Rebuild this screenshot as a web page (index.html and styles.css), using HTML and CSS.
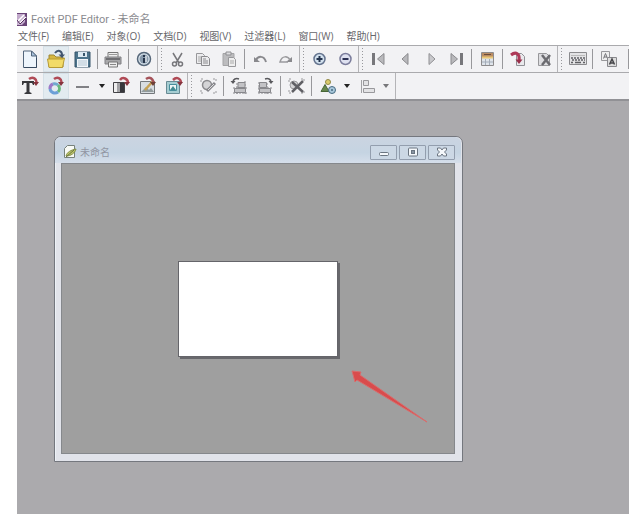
FILE: index.html
```html
<!DOCTYPE html>
<html lang="zh-CN">
<head>
    <meta charset="utf-8">
    <title>Foxit PDF Editor - 未命名</title>
    <link rel="stylesheet" href="styles.css">
</head>
<body>
<div class="app">
    <header class="titlebar">
        <svg class="app-icon" width="10" height="13" viewBox="0 0 10 13">
            <path d="M0 0h10v13H0z" fill="#694477"/>
            <path d="M0 1h8v8l-3 3H0z" fill="#c2aacb"/>
            <path d="M1 8l6-6M2 11l7-7" stroke="#fff" stroke-width="1.5"/>
            <path d="M0 7l3 4 6-6" stroke="#56305f" fill="none"/>
        </svg>
        <h1>Foxit PDF Editor - <span class="doc-name">未命名</span></h1>
    </header>

    <nav class="menubar">
        <button type="button">文件(F)</button>
        <button type="button">编辑(E)</button>
        <button type="button">对象(O)</button>
        <button type="button">文档(D)</button>
        <button type="button">视图(V)</button>
        <button type="button">过滤器(L)</button>
        <button type="button">窗口(W)</button>
        <button type="button">帮助(H)</button>
    </nav>

    <div class="toolbar">
        <button type="button" class="tool" aria-label="New">
            <svg viewBox="0 0 20 20"><path d="M3.500 2h8l5 5v11.500h-13z" fill="#eef5fc" stroke="#53667c"/><path d="M11.500 2v5h5z" fill="#a9c2dc" stroke="#53667c"/><path d="M4 18.500h12.500V9" fill="none" stroke="#394b61"/></svg>
        </button>
        <button type="button" class="tool active" aria-label="Open">
            <svg viewBox="0 0 20 20"><path d="M3 18V6h5l2 2h7v10z" fill="#d6b741" stroke="#9d8738"/><path d="M1.500 10h15l2-1-2 9.500H3z" fill="#f2db68" stroke="#b79b36"/><path d="M9 4c3-4 7-2 7 2" fill="none" stroke="#41556f" stroke-width="2"/><path d="M12.500 5.500h6.500L16 9z" fill="#41556f"/></svg>
        </button>
        <button type="button" class="tool" aria-label="Save">
            <svg viewBox="0 0 20 20"><path d="M3 3h15v15H3z" fill="#4d748c" stroke="#36546a"/><path d="M6 3h9v5H6z" fill="#dce9f2"/><path d="M11 4h2v3h-2z" fill="#36546a"/><path d="M5 10h11v8H5z" fill="#f2f6fa"/><path d="M6 12h9M6 14h9M6 16h9" stroke="#b3c5d2"/></svg>
        </button>
        <span class="sep"></span>
        <button type="button" class="tool" aria-label="Print">
            <svg viewBox="0 0 20 20"><path d="M5 8V3.500h10V8" fill="#eee" stroke="#777"/><path d="M6 5.500h8" stroke="#999"/><path d="M2 8h16v7H2z" fill="#a8a8aa" stroke="#808084"/><path d="M3 10h14" stroke="#6e6e72" stroke-width="2"/><path d="M5.500 13h9v5h-9z" fill="#eee" stroke="#777"/><path d="M7 15.500h6" stroke="#888"/></svg>
        </button>
        <span class="sep"></span>
        <button type="button" class="tool" aria-label="Information">
            <svg viewBox="0 0 20 20"><circle cx="10" cy="10" r="6.500" fill="#d9e4ec" stroke="#56677a" stroke-width="1.500"/><circle cx="10" cy="10" r="4.500" fill="#8799ab"/><path d="M10 6v2M10 9v5" stroke="#26344a" stroke-width="2"/><path d="M12 7v6" stroke="#fff"/></svg>
        </button>
        <span class="grip"></span>
        <button type="button" class="tool" aria-label="Cut">
            <svg viewBox="0 0 20 20"><path d="M6 4l6 10M15 4L9 14" stroke="#77777b" stroke-width="1.500"/><circle cx="7.500" cy="15" r="2" fill="none" stroke="#77777b" stroke-width="1.500"/><circle cx="13.500" cy="15" r="2" fill="none" stroke="#77777b" stroke-width="1.500"/></svg>
        </button>
        <button type="button" class="tool" aria-label="Copy">
            <svg viewBox="0 0 20 20"><path d="M3.500 4.500h6l2 2v8h-8z" fill="#ececee" stroke="#97979a"/><path d="M5 8h4M5 10h3M5 12h3" stroke="#aaa"/><path d="M8.500 7.500h6l2 2v7h-8z" fill="#ececee" stroke="#8b8b8e"/><path d="M10 10h3M10 12h5M10 14h5" stroke="#8b8b8e"/></svg>
        </button>
        <button type="button" class="tool" aria-label="Paste">
            <svg viewBox="0 0 20 20"><path d="M4 4.500h11v12H4z" fill="#bcbcbe" stroke="#a4a4a6"/><path d="M7 3h5v3H7z" fill="#dedee0" stroke="#909093"/><path d="M9.500 8.500h5l2 2v7h-7z" fill="#eee" stroke="#98989b"/><path d="M11 12h4M11 14h4" stroke="#aaa"/></svg>
        </button>
        <span class="sep"></span>
        <button type="button" class="tool" aria-label="Undo">
            <svg viewBox="0 0 20 20"><path d="M4 8v5h6z" fill="#89898d"/><path d="M6 11c2-4 8-5 10 2" fill="none" stroke="#89898d" stroke-width="2"/></svg>
        </button>
        <button type="button" class="tool" aria-label="Redo">
            <svg viewBox="0 0 20 20"><path d="M16 8v5h-6z" fill="#89898d"/><path d="M14 11c-2-4-8-5-10 2h8" fill="none" stroke="#9b9b9e" stroke-width="1.500"/></svg>
        </button>
        <span class="grip"></span>
        <button type="button" class="tool" aria-label="Zoom in">
            <svg viewBox="0 0 20 20"><circle cx="10.500" cy="10" r="5.500" fill="#d2e1ee" stroke="#65748f" stroke-width="1.500"/><path d="M7.500 10h6M10.500 7v6" stroke="#24344e" stroke-width="2"/></svg>
        </button>
        <button type="button" class="tool" aria-label="Zoom out">
            <svg viewBox="0 0 20 20"><circle cx="10.500" cy="10" r="5.500" fill="#dee1f0" stroke="#7b7d9c" stroke-width="1.500"/><path d="M7.500 10h6" stroke="#2c3154" stroke-width="2"/></svg>
        </button>
        <span class="grip"></span>
        <button type="button" class="tool" aria-label="First page">
            <svg viewBox="0 0 20 20"><path d="M5.500 4v12" stroke="#77777b" stroke-width="3"/><path d="M16 4.500v11L9.500 10z" fill="#b9b9bc" stroke="#8b8b8e"/></svg>
        </button>
        <button type="button" class="tool" aria-label="Previous page">
            <svg viewBox="0 0 20 20"><path d="M14 4.500v11L8 10z" fill="#b9b9bc" stroke="#8b8b8e"/></svg>
        </button>
        <button type="button" class="tool" aria-label="Next page">
            <svg viewBox="0 0 20 20"><path d="M9 4.500v11l6-5.500z" fill="#c9c9cc" stroke="#909093"/></svg>
        </button>
        <button type="button" class="tool" aria-label="Last page">
            <svg viewBox="0 0 20 20"><path d="M5 4.500v11l6.500-5.500z" fill="#b9b9bc" stroke="#8b8b8e"/><path d="M15.500 4v12" stroke="#77777b" stroke-width="3"/></svg>
        </button>
        <span class="sep"></span>
        <button type="button" class="tool" aria-label="Properties">
            <svg viewBox="0 0 20 20"><path d="M4.500 3.500h12v13h-12z" fill="#dfe4ea" stroke="#8d8b8c"/><path d="M5 4h11v4H5z" fill="#b98b62"/><path d="M7 5.500h7" stroke="#6a4c3a"/><path d="M5 8.500h11" stroke="#e9c777" stroke-width="2"/><path d="M8.500 10v6M12.500 10v6M5 13h11" stroke="#a4adb9"/></svg>
        </button>
        <span class="sep"></span>
        <button type="button" class="tool" aria-label="Insert page">
            <svg viewBox="0 0 20 20"><path d="M8.500 4.500h5l3 3v9h-8z" fill="#e9e9ec" stroke="#919196"/><path d="M3 6c5-4 9-1 8 5" fill="none" stroke="#ad3857" stroke-width="3"/><path d="M7.500 10.500h7L11 15z" fill="#98304b"/></svg>
        </button>
        <button type="button" class="tool" aria-label="Delete page">
            <svg viewBox="0 0 20 20"><path d="M4.500 4.500h8l3 3v9h-11z" fill="#dedee1" stroke="#97979a"/><path d="M8 6l8 10M16 6L8 16" stroke="#6b6b70" stroke-width="2.500"/></svg>
        </button>
        <span class="grip"></span>
        <button type="button" class="tool" aria-label="Keyboard">
            <svg viewBox="0 0 20 20"><path d="M2.500 3.500h17v12h-17z" fill="#e3e3e5" stroke="#8b8b8e"/><path d="M4 6.500h14" stroke="#bbb"/><path d="M4 9h14M5 11h13" stroke="#606064" stroke-width="1.500" stroke-dasharray="2 1"/><path d="M4 13.500h2M8 13.500h6M16 13.500h2" stroke="#606064" stroke-width="1.500"/></svg>
        </button>
        <span class="sep"></span>
        <button type="button" class="tool" aria-label="Replace font">
            <svg viewBox="0 0 20 20"><path d="M3.500 2.500h8v9h-8z" fill="#eee" stroke="#98989b"/><path d="M5.500 9.500l2-5 2 5M6 8h3" fill="none" stroke="#747478"/><path d="M9.500 8.500h9v9h-9z" fill="#ddd" stroke="#88888c"/><path d="M11.500 15.500l2.500-5.500 2.500 5.500M12.500 14h3" fill="none" stroke="#454549" stroke-width="1.500"/></svg>
        </button>
        <span class="sep last"></span>
    </div>

    <div class="toolbar">
        <button type="button" class="tool" aria-label="Insert text">
            <svg viewBox="0 0 20 20"><path d="M2 5h12v4h-1l-1-2H9.500v9l2 1v1h-7v-1l2-1V7H4L3 9H2z" fill="#38383c"/><path d="M9 3c4-3 8 0 7.500 4" fill="none" stroke="#b04a56" stroke-width="2.500"/><path d="M13 6h6l-3 4z" fill="#85333e"/></svg>
        </button>
        <button type="button" class="tool active" aria-label="Insert graphic">
            <svg viewBox="0 0 20 20"><g fill="none" stroke-width="3"><path d="M4 13a5 5 0 0 1 3-5" stroke="#9c79c8"/><path d="M7 8a5 5 0 0 1 5 1" stroke="#70a8d0"/><path d="M12 9a5 5 0 0 1 0 7" stroke="#66b77d"/><path d="M12 16a5 5 0 0 1-8-3" stroke="#6b9fd7"/></g><path d="M8 3c4-3 8 0 7.500 4" fill="none" stroke="#b04a56" stroke-width="2.500"/><path d="M12 6h6l-3 4z" fill="#85333e"/></svg>
        </button>
        <button type="button" class="tool" aria-label="Line">
            <svg viewBox="0 0 20 20"><path d="M4 11h13" stroke="#5b5b60" stroke-width="1.500"/></svg>
        </button>
        <button type="button" class="drop" aria-label="Line options"><svg viewBox="0 0 8 6"><path d="M1 1h6L4 5z" fill="#222"/></svg></button>
        <button type="button" class="tool" aria-label="Insert shading">
            <svg viewBox="0 0 20 20"><path d="M2.500 6.500h11v10h-11z" fill="#a2a2a5" stroke="#434347"/><path d="M3 7h3v9H3z" fill="#eee"/><path d="M9 7h4v9H9z" fill="#38383c"/><path d="M9 4c3-4 8-1 8 3" fill="none" stroke="#b04a56" stroke-width="2.500"/><path d="M13 6h6l-3 4z" fill="#85333e"/></svg>
        </button>
        <button type="button" class="tool" aria-label="Insert image">
            <svg viewBox="0 0 20 20"><path d="M3.500 5.500h14v12h-14z" fill="#d8dde1" stroke="#74787c"/><path d="M4 16l5-5 3 3 2-2 3 4z" fill="#929c9d"/><path d="M8 14l8-9" stroke="#c6a253" stroke-width="2.500"/><path d="M9 3c4-3 7 0 8 4" fill="none" stroke="#a5535a" stroke-width="2.500"/><path d="M13 6h6l-3 4z" fill="#704037"/></svg>
        </button>
        <button type="button" class="tool" aria-label="Insert form">
            <svg viewBox="0 0 20 20"><path d="M3.500 5.500h13v12h-13z" fill="#a6cdd2" stroke="#688b94"/><path d="M6.500 8.500h7v6h-7z" fill="#eef6f5" stroke="#488e9b"/><path d="M7 14l3-4 3 4z" fill="#438a91"/><path d="M10 4c4-4 8-1 8 3" fill="none" stroke="#b04a56" stroke-width="2.500"/><path d="M14 6h6l-3 4z" fill="#85333e"/></svg>
        </button>
        <span class="grip wide"></span>
        <button type="button" class="tool" aria-label="Edit object">
            <svg viewBox="0 0 20 20"><path d="M3 6V3h3M15 3h3v3M3 14v3h3M15 17h3v-3" fill="none" stroke="#9a9a9d" stroke-dasharray="2 1"/><circle cx="9" cy="9" r="4.500" fill="#d4d4d6" stroke="#8b8b8e" stroke-width="1.500"/><path d="M9 15l8-8" stroke="#85858a" stroke-width="3"/><path d="M10 14l6-6" stroke="#ddd"/></svg>
        </button>
        <span class="sep"></span>
        <button type="button" class="tool" aria-label="Rotate left">
            <svg viewBox="0 0 20 20"><path d="M4 6c0-3 3-4 6-3" fill="none" stroke="#58585c" stroke-width="1.500"/><path d="M1.500 5h5L4 8z" fill="#58585c"/><path d="M4 12h14M4 17h14M8 7v11M16 5v13" stroke="#88888c" stroke-dasharray="2 1"/><path d="M9 6.500h7v5H9zM5.500 12.500h11v4h-11z" fill="#c3c3c6" stroke="#88888c"/></svg>
        </button>
        <button type="button" class="tool" aria-label="Rotate right">
            <svg viewBox="0 0 20 20"><path d="M16 6c0-3-3-4-6-3" fill="none" stroke="#58585c" stroke-width="1.500"/><path d="M13.500 5h5L16 8z" fill="#58585c"/><path d="M3 12h14M3 17h14M4 6v12M12 7v11" stroke="#88888c" stroke-dasharray="2 1"/><path d="M4.500 6.500h7v5h-7zM4.500 12.500h11v4h-11z" fill="#c3c3c6" stroke="#88888c"/></svg>
        </button>
        <span class="sep"></span>
        <button type="button" class="tool" aria-label="Delete object">
            <svg viewBox="0 0 20 20"><path d="M3 6V3h3M15 3h3v3M3 14v3h3M15 17h3v-3" fill="none" stroke="#9a9a9d" stroke-dasharray="2 1"/><circle cx="8" cy="9" r="4" fill="#d4d4d6" stroke="#9a9a9d"/><path d="M6 6l11 10M17 5L6 16" stroke="#606065" stroke-width="2.500"/></svg>
        </button>
        <span class="sep"></span>
        <button type="button" class="tool" aria-label="Shapes">
            <svg viewBox="0 0 20 20"><circle cx="11" cy="6" r="2.500" fill="#dacb6c" stroke="#918846"/><path d="M4 15.500l4-7 4 7z" fill="#66874d" stroke="#486637"/><circle cx="15" cy="14" r="3.500" fill="#a8c7da" stroke="#476b81"/><circle cx="15" cy="14" r="1" fill="#476b81"/></svg>
        </button>
        <button type="button" class="drop" aria-label="Shape options"><svg viewBox="0 0 8 6"><path d="M1 1h6L4 5z" fill="#222"/></svg></button>
        <button type="button" class="tool" aria-label="Align">
            <svg viewBox="0 0 20 20"><path d="M5.500 4v13" stroke="#a1a1a4"/><path d="M7.500 4.500h5v5h-5zM7.500 12.500h11v4h-11z" fill="#e3e3e5" stroke="#99999c"/></svg>
        </button>
        <button type="button" class="drop" aria-label="Align options"><svg viewBox="0 0 8 6"><path d="M1 1h6L4 5z" fill="#77777a"/></svg></button>
        <span class="toolbar-end"></span>
    </div>

    <main class="workspace">
        <section class="doc-window">
            <header class="doc-title">
                <svg width="14" height="14" viewBox="0 0 14 14">
                    <path d="M1.500 3.500l3-3h7v12h-10z" fill="#f8faf5" stroke="#76817b"/>
                    <path d="M3 11c1-4 5-6 10-7-1 4-5 7-10 7z" fill="#bcc56b" stroke="#818c45"/>
                    <path d="M3 12l8-7" stroke="#69733b"/>
                </svg>
                <h2>未命名</h2>
                <div class="win-buttons">
                    <button type="button" aria-label="Minimize">
                        <svg viewBox="0 0 12 10"><rect x="1.500" y="5.500" width="9" height="3" rx="1" fill="#f5f8fb" stroke="#6b7581"/></svg>
                    </button>
                    <button type="button" aria-label="Maximize">
                        <svg viewBox="0 0 12 10"><rect x="1.500" y="1" width="9" height="8" rx="1" fill="#f5f8fb" stroke="#6b7581"/><rect x="4.500" y="3.500" width="3" height="3" fill="#8995a2" stroke="#6b7581"/></svg>
                    </button>
                    <button type="button" aria-label="Close">
                        <svg viewBox="0 0 12 10"><path d="M1.500 1h3L6 3l1.500-2h3v2L8.500 5l2 2v2h-3L6 7 4.500 9h-3V7l2-2-2-2z" fill="#f5f8fb" stroke="#6b7581"/></svg>
                    </button>
                </div>
            </header>
            <div class="doc-view">
                <div class="page"></div>
                <svg class="arrow" width="80" height="56" viewBox="0 0 80 56">
                    <path d="M1 1l9 1-1 3 67 47-70-42-2 2z" fill="#d94b4c" stroke="#d86c6c" stroke-linejoin="round"/>
                </svg>
            </div>
        </section>
    </main>
</div>
</body>
</html>
```
FILE: styles.css
```css
* {
    box-sizing: border-box;
}

body {
    margin: 0;
    background: #fff;
    font-family: "Open Sans", "Noto Sans CJK SC", sans-serif;
    font-size: 10px;
    color: #66666a;
}

button {
    border: 0;
    padding: 0;
    background: none;
    font: inherit;
    color: inherit;
}

svg {
    display: block;
}

.app {
    display: flex;
    flex-direction: column;
    min-height: 100vh;
    padding: 12px 9px 6px 17px;
}

/* title and menus */
.titlebar {
    display: flex;
    align-items: center;
    gap: 4px;
    height: 15px;
}

.titlebar h1 {
    margin: 0;
    font-family: Roboto, "Noto Sans CJK SC", sans-serif;
    font-size: 11px;
    line-height: 15px;
    font-weight: normal;
    color: #8b8b90;
}

.menubar {
    display: flex;
    gap: 13px;
    height: 18px;
    padding-left: 1px;
}

.menubar button {
    line-height: 18px;
    white-space: nowrap;
}

/* toolbars */
.toolbar {
    display: flex;
    height: 27px;
    overflow: hidden;
    border-top: 1px solid #aaaaad;
    background: #f2f2f4;
}

.tool {
    display: flex;
    flex: none;
    align-items: center;
    justify-content: center;
    width: 26px;
}

.tool svg {
    width: 20px;
    height: 20px;
}

.tool.active {
    background: #e3ebf0;
    box-shadow: inset 0 0 0 1px #d5e0e7;
}

.drop {
    display: flex;
    flex: none;
    align-items: center;
    justify-content: center;
    width: 13px;
}

.drop svg {
    width: 8px;
    height: 6px;
}

.sep {
    flex: none;
    width: 1px;
    margin: 3px 2px;
    background: #98989b;
}

.sep.last {
    margin-right: 0;
    margin-left: auto;
}

.grip {
    flex: none;
    width: 7px;
    border-left: 1px solid #b4b4b7;
    background: radial-gradient(circle, #98989c 1px, transparent 1px) 2px 4px / 3px 3px repeat-y;
}

.grip.wide {
    width: 8px;
    margin-left: 1px;
}

.toolbar-end {
    width: 1px;
    margin-left: 3px;
    background: #b4b4b7;
}

/* child window */
.workspace {
    display: flex;
    flex: 1;
    padding: 35px 166px 52px 37px;
    border-top: 2px solid #919195;
    background: #abaaad;
}

.doc-window {
    display: flex;
    flex: 1;
    flex-direction: column;
    padding: 0 7px 7px 6px;
    border: 1px solid #74777e;
    border-radius: 7px 7px 0 0;
    background: #e1e3ea;
    box-shadow: inset 1px 1px 0 #edf1f6;
}

.doc-title {
    display: flex;
    align-items: center;
    gap: 3px;
    height: 26px;
    margin: 0 -6px;
    padding: 4px 6px 0 8px;
    border-radius: 6px 6px 0 0;
    background: linear-gradient(to bottom, #cbd4e1, #c5d4e2 60%, #d5deea);
}

.doc-title h2 {
    margin: 0;
    font-size: 10px;
    line-height: 14px;
    font-weight: normal;
    color: #9296a3;
}

.win-buttons {
    display: flex;
    gap: 2px;
    margin-left: auto;
}

.win-buttons button {
    display: flex;
    align-items: center;
    justify-content: center;
    width: 27px;
    height: 15px;
    border: 1px solid #939eae;
    border-radius: 1px;
    background: #ccd8e5;
}

.win-buttons svg {
    width: 12px;
    height: 10px;
}

.doc-view {
    position: relative;
    display: flex;
    flex: 1;
    align-items: center;
    justify-content: center;
    border: 1px solid #85888c;
    background: #9f9f9f;
}

.page {
    width: 160px;
    height: 96px;
    border: 1px solid #65656a;
    background: #fff;
    box-shadow: 2px 2px 0 #68686c;
}

/* red pointer drawn over the sheet's lower right corner */
.arrow {
    position: absolute;
    left: calc(50% + 93px);
    top: calc(50% + 61px);
}
```
